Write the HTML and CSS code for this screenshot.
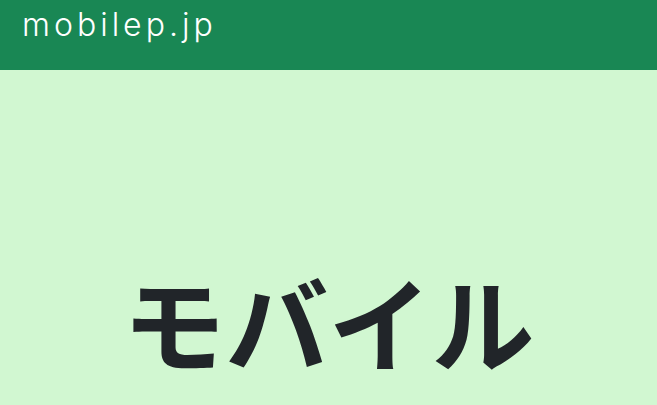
FILE: index.html
```html
<!DOCTYPE html>
<html lang="ja">
<head>
<meta charset="utf-8">
<link rel="stylesheet" href="styles.css">
</head>
<body>
<header class="site-header">
  <div class="brand">mobilep.jp</div>
</header>
<main class="hero">
  <h1 class="title">モバイル</h1>
</main>
</body>
</html>
```
FILE: styles.css
```css
html, body {
  margin: 0;
  padding: 0;
}
body {
  background: #d1f7d1;
  font-family: "Noto Sans CJK JP", sans-serif;
  height: 405px;
  overflow: hidden;
}
.site-header {
  background: #198754;
  height: 70px;
  display: flex;
  align-items: flex-start;
  padding: 0 22px;
  box-sizing: border-box;
}
.brand {
  color: #ffffff;
  font-family: "Inter", "Lato", sans-serif;
  font-weight: 300;
  font-size: 32px;
  letter-spacing: 4px;
  line-height: 1;
  padding-top: 9px;
}
.hero {
  display: flex;
  justify-content: center;
  padding-top: 199px;
}
.title {
  margin: 0;
  font-family: "Noto Sans CJK JP", sans-serif;
  font-weight: 700;
  font-size: 103px;
  line-height: 1;
  color: #212529;
}
```
